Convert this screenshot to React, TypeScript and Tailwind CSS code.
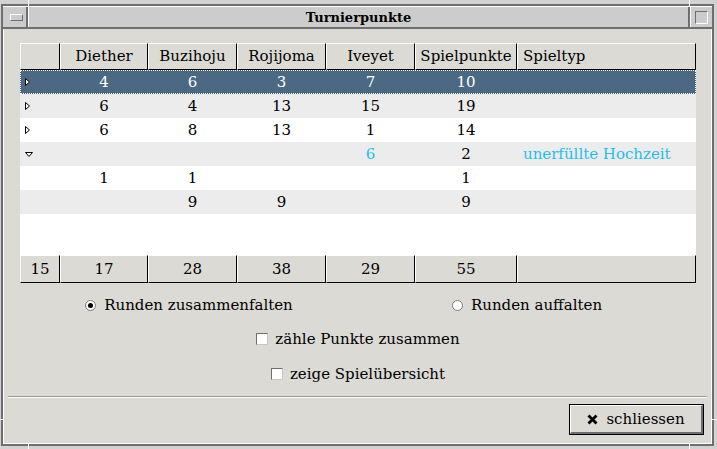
import React from "react";

const W = ["w-[40px]", "w-[88px]", "w-[89px]", "w-[89px]", "w-[89px]", "w-[102px]", "w-[179px]"];
const HEADERS = ["", "Diether", "Buzihoju", "Rojijoma", "Iveyet", "Spielpunkte", "Spieltyp"];

type Cell = { t: string; cyan?: boolean };
type Row = { tri?: "right" | "down"; cells: Cell[]; selected?: boolean };

const c = (t: string, cyan?: boolean): Cell => ({ t, cyan });

const ROWS: Row[] = [
  { tri: "right", selected: true, cells: [c("4"), c("6"), c("3"), c("7"), c("10"), c("")] },
  { tri: "right", cells: [c("6"), c("4"), c("13"), c("15"), c("19"), c("")] },
  { tri: "right", cells: [c("6"), c("8"), c("13"), c("1"), c("14"), c("")] },
  { tri: "down", cells: [c(""), c(""), c(""), c("6", true), c("2"), c("unerfüllte Hochzeit", true)] },
  { cells: [c("1"), c("1"), c(""), c(""), c("1"), c("")] },
  { cells: [c(""), c("9"), c("9"), c(""), c("9"), c("")] },
];

const FOOTER = ["15", "17", "28", "38", "29", "55", ""];

function TriRight() {
  return (
    <svg width="7" height="10" viewBox="0 0 7 10" className="block">
      <path d="M1.5 1.5 L5.5 5 L1.5 8.5 Z" fill="white" stroke="black" strokeWidth="1" />
    </svg>
  );
}

function TriDown() {
  return (
    <svg width="10" height="7" viewBox="0 0 10 7" className="block">
      <path d="M1.5 1.5 L8.5 1.5 L5 5.5 Z" fill="white" stroke="black" strokeWidth="1" />
    </svg>
  );
}

function Radio({ on }: { on?: boolean }) {
  return (
    <span className="w-[11px] h-[11px] rounded-full bg-white border border-[#7a7a7a] flex items-center justify-center shrink-0">
      {on && <span className="w-[5px] h-[5px] rounded-full bg-black" />}
    </span>
  );
}

function Check() {
  return (
    <span className="w-[12px] h-[12px] bg-white border border-t-[#6e6e6e] border-l-[#6e6e6e] border-r-[#c8c6c1] border-b-[#c8c6c1] shrink-0" />
  );
}

export default function App() {
  return (
    <div className="relative w-[717px] h-[449px] bg-[#d2d2d2] pt-[4px] pl-[1px] pr-[3px] pb-[3px] font-['DejaVu_Serif',serif] text-black">
      <div className="w-full h-full border-2 border-[#6e6e6e] flex flex-col">
        {/* Title bar */}
        <div className="h-[23px] flex border-t border-t-white border-b-2 border-b-[#6e6e6e] bg-[#cccccc] shrink-0">
          <div className="w-[25px] flex items-center justify-center pl-[3px] border-r-2 border-r-[#6e6e6e]">
            <span className="w-[13px] h-[7px] border border-t-white border-l-white border-r-[#6e6e6e] border-b-[#6e6e6e]" />
          </div>
          <div className="w-px bg-white" />
          <div className="flex-1 flex items-center justify-center text-[13px] font-bold leading-none">
            Turnierpunkte
          </div>
          <div className="w-[2px] bg-[#6e6e6e]" />
          <div className="w-px bg-white" />
          <div className="w-[21px] flex items-center justify-center">
            <span className="w-[13px] h-[13px] border border-t-[#6e6e6e] border-l-[#6e6e6e] border-r-white border-b-white" />
          </div>
        </div>

        {/* Content */}
        <div className="flex-1 flex flex-col bg-[#dcdad5] border-l border-r border-b border-white pt-[14px]">
          {/* Table */}
          <div className="ml-[16px] w-[676px] flex flex-col text-[15px] leading-none">
            <div className="h-[27px] flex">
              {HEADERS.map((h, i) => (
                <div
                  key={i}
                  className={`${W[i]} h-full flex items-center ${i === 6 ? "justify-start pl-[5px]" : "justify-center"} bg-[#dcdad5] border-l border-t border-l-white border-t-white border-r border-b border-r-black border-b-black whitespace-nowrap overflow-hidden`}
                >
                  {h}
                </div>
              ))}
            </div>
            <div className="h-[185px] bg-white flex flex-col">
              {ROWS.map((r, ri) => (
                <div
                  key={ri}
                  className={`h-[24px] flex shrink-0 ${
                    r.selected
                      ? "bg-[#4b6983] text-white outline outline-1 outline-dotted outline-white -outline-offset-1"
                      : ri % 2 === 1
                      ? "bg-[#ececec]"
                      : "bg-white"
                  }`}
                >
                  <div className={`${W[0]} h-full flex items-center pl-[4px]`}>
                    {r.tri === "right" && <TriRight />}
                    {r.tri === "down" && <TriDown />}
                  </div>
                  {r.cells.map((cell, ci) => (
                    <div
                      key={ci}
                      className={`${W[ci + 1]} h-full flex items-center ${ci === 5 ? "justify-start pl-[6px]" : "justify-center"} whitespace-nowrap ${cell.cyan ? "text-[#1fbff0]" : ""}`}
                    >
                      {cell.t}
                    </div>
                  ))}
                </div>
              ))}
            </div>
            <div className="h-[28px] flex">
              {FOOTER.map((f, i) => (
                <div
                  key={i}
                  className={`${W[i]} h-full flex items-center justify-center bg-[#dcdad5] border-l border-t border-l-white border-t-white border-r border-b border-r-black border-b-black`}
                >
                  {f}
                </div>
              ))}
            </div>
          </div>

          {/* Radios */}
          <div className="ml-[16px] w-[676px] mt-[10px] h-[24px] grid grid-cols-2 text-[15px] leading-none">
            <div className="flex items-center justify-center gap-[8px]">
              <Radio on />
              <span>Runden zusammenfalten</span>
            </div>
            <div className="flex items-center justify-center gap-[8px]">
              <Radio />
              <span>Runden auffalten</span>
            </div>
          </div>

          <div className="ml-[16px] w-[676px] mt-[10px] h-[24px] flex items-center justify-center gap-[7px] text-[15px] leading-none">
            <Check />
            <span>zähle Punkte zusammen</span>
          </div>
          <div className="ml-[16px] w-[676px] mt-[11px] h-[24px] flex items-center justify-center gap-[7px] text-[15px] leading-none">
            <Check />
            <span>zeige Spielübersicht</span>
          </div>

          {/* Separator */}
          <div className="mx-[4px] mt-[10px] h-[2px] flex flex-col">
            <div className="h-px bg-[#9a9a9a]" />
            <div className="h-px bg-white" />
          </div>

          {/* Button row */}
          <div className="mt-[6px] flex justify-end pr-[7px]">
            <button className="w-[135px] h-[31px] border border-black bg-[#dcdad5] p-0">
              <div className="w-full h-full flex items-center justify-center gap-[8px] border-t border-l border-white border-r-2 border-b-2 border-r-[#6e6e6e] border-b-[#6e6e6e] text-[15px] leading-none">
                <svg width="11" height="11" viewBox="0 0 11 11" className="block">
                  <path d="M1.5 1.5 L9.5 9.5 M9.5 1.5 L1.5 9.5" stroke="black" strokeWidth="2.8" strokeLinecap="butt" />
                </svg>
                <span>schliessen</span>
              </div>
            </button>
          </div>
        </div>
      </div>

      {/* frame handle notches */}
      <div className="absolute left-[28px] top-0 w-px h-[6px] bg-white" />
      <div className="absolute left-[689px] top-0 w-px h-[6px] bg-white" />
      <div className="absolute left-[28px] bottom-0 w-px h-[6px] bg-white" />
      <div className="absolute left-[689px] bottom-0 w-px h-[6px] bg-white" />
      <div className="absolute left-0 top-[419px] w-[4px] h-px bg-white" />
      <div className="absolute right-0 top-[419px] w-[6px] h-px bg-white" />
    </div>
  );
}
